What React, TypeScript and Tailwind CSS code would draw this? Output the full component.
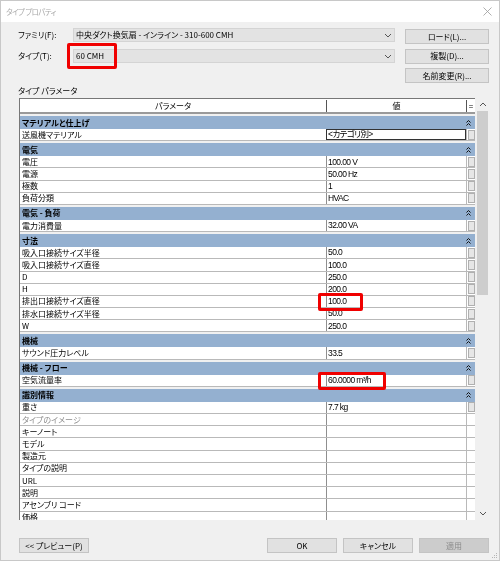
import React from "react";

const font = { fontFamily: '"Noto Sans CJK JP", "Liberation Sans", sans-serif', fontFeatureSettings: '"palt"' };

type Row = { n: string; v?: string; dim?: boolean; sel?: boolean };
type Section = { title: string; rows: Row[] };

const sections: Section[] = [
  { title: "マテリアルと仕上げ", rows: [{ n: "送風機マテリアル", v: "<カテゴリ別>", sel: true }] },
  {
    title: "電気",
    rows: [
      { n: "電圧", v: "100.00 V" },
      { n: "電源", v: "50.00 Hz" },
      { n: "極数", v: "1" },
      { n: "負荷分類", v: "HVAC" },
    ],
  },
  { title: "電気 - 負荷", rows: [{ n: "電力消費量", v: "32.00 VA" }] },
  {
    title: "寸法",
    rows: [
      { n: "吸入口接続サイズ半径", v: "50.0" },
      { n: "吸入口接続サイズ直径", v: "100.0" },
      { n: "D", v: "250.0" },
      { n: "H", v: "200.0" },
      { n: "排出口接続サイズ直径", v: "100.0" },
      { n: "排水口接続サイズ半径", v: "50.0" },
      { n: "W", v: "250.0" },
    ],
  },
  { title: "機械", rows: [{ n: "サウンド圧力レベル", v: "33.5" }] },
  { title: "機械 - フロー", rows: [{ n: "空気流量率", v: "60.0000 m³/h" }] },
  {
    title: "識別情報",
    rows: [
      { n: "重さ", v: "7.7 kg" },
      { n: "タイプのイメージ", dim: true },
      { n: "キーノート" },
      { n: "モデル" },
      { n: "製造元" },
      { n: "タイプの説明" },
      { n: "URL" },
      { n: "説明" },
      { n: "アセンブリ コード" },
      { n: "価格" },
    ],
  },
];

function Chevron() {
  return (
    <svg width="8" height="5" viewBox="0 0 8 5" fill="none" stroke="#555" strokeWidth="1">
      <path d="M1 1l3 3 3-3" />
    </svg>
  );
}

function Combo({ text }: { text: string }) {
  return (
    <div className="flex h-[14px] items-center justify-between border border-[#d4d4d4] bg-[#e3e3e3] pl-[2px] pr-[1px] text-[8px] text-black">
      <span>{text}</span>
      <span className="pr-[1px]">
        <Chevron />
      </span>
    </div>
  );
}

function Btn({ label, className = "", disabled = false }: { label: string; className?: string; disabled?: boolean }) {
  return (
    <div
      className={`flex h-[15px] items-center justify-center border border-[#c4c4c4] text-[8px] ${
        disabled ? "bg-[#cccccc] text-[#8a8a8a]" : "bg-[#e1e1e1] text-black"
      } ${className}`}
    >
      {label}
    </div>
  );
}

function Group({ title }: { title: string }) {
  return (
    <div className="flex h-[13px] items-center justify-between bg-[#94b0d0] pl-[2px] pr-[4px] text-[8px] font-semibold text-black">
      <span>{title}</span>
      <svg width="5" height="6" viewBox="0 0 5 6" fill="none" stroke="#111" strokeWidth="1">
        <path d="M.5 2.5l2-2 2 2M.5 5.5l2-2 2 2" />
      </svg>
    </div>
  );
}

function DataRow({ r }: { r: Row }) {
  return (
    <div className="flex h-[12.2px] border-b border-[#b9b9b9] bg-white text-[8px] leading-none text-black">
      <div className={`flex w-[306px] items-center pl-[2px] ${r.dim ? "text-[#8c8c8c]" : ""}`}>{r.n}</div>
      <div
        className={`flex w-[140px] items-center border-l pl-[1px] ${
          r.sel ? "border border-[#333] bg-white" : "border-[#8f8f8f]"
        }`}
      >
        <span style={{ fontFamily: '"Liberation Sans", "Noto Sans CJK JP", sans-serif' }} className="text-[8.5px] tracking-[-0.6px]">
          {r.v}
        </span>
      </div>
      <div className="flex w-[9px] items-center justify-center border-l border-[#b9b9b9]">
        {r.v && <div className="h-[10px] w-[7px] border border-[#b0b0b0] bg-[#e6e6e6]" />}
      </div>
    </div>
  );
}

function Highlight({ className }: { className: string }) {
  return <div className={`absolute rounded-[2px] border-[3px] border-[#f00000] ${className}`} />;
}

export default function App() {
  return (
    <div
      className="relative flex h-[561px] w-[500px] flex-col border border-[#c8c8c8] bg-[#f0f0f0] blur-[0.3px]"
      style={font}
    >
      <div className="flex h-[21px] shrink-0 items-center justify-between bg-white pl-[5px] pr-[7px]">
        <span className="text-[7.5px] tracking-[-0.6px] text-[#a8a8a8]">タイプ プロパティ</span>
        <svg width="9" height="9" viewBox="0 0 9 9" stroke="#9a9a9a" strokeWidth="0.8">
          <path d="M.5.5l8 8M8.5.5l-8 8" />
        </svg>
      </div>

      <div className="flex shrink-0 gap-[10px] pl-[17px] pr-[10px] pt-[6px]">
        <div className="flex flex-1 flex-col gap-[7px]">
          <div className="flex items-center">
            <span className="w-[55px] text-[8px] text-black">ファミリ(F):</span>
            <div className="flex-1">
              <Combo text="中央ダクト換気扇 - インライン - 310-600 CMH" />
            </div>
          </div>
          <div className="flex items-center">
            <span className="w-[55px] text-[8px] text-black">タイプ(T):</span>
            <div className="flex-1">
              <Combo text="60 CMH" />
            </div>
          </div>
        </div>
        <div className="flex w-[84px] flex-col gap-[4.5px] pt-[1px]">
          <Btn label="ロード(L)..." />
          <Btn label="複製(D)..." />
          <Btn label="名前変更(R)..." />
        </div>
      </div>

      <div className="mt-[1px] h-[13px] shrink-0 pl-[17px] text-[8px] leading-[13px] text-black">タイプ パラメータ</div>

      <div className="ml-[18px] mt-[1px] flex h-[422px] w-[470px] shrink-0">
        <div className="w-[456px] overflow-hidden border-l border-t border-[#777]">
          <div className="flex h-[15px] items-center border-b-2 border-[#9a9a9a] bg-white text-[8px] text-black">
            <div className="w-[306px] text-center">パラメータ</div>
            <div className="w-[140px] border-l border-[#555] text-center">値</div>
            <div className="w-[9px] border-l border-[#555] text-center">=</div>
          </div>
          <div className="flex flex-col gap-[2px] pt-[2px]">
            {sections.map((s) => (
              <div key={s.title}>
                <Group title={s.title} />
                {s.rows.map((r) => (
                  <DataRow key={r.n} r={r} />
                ))}
              </div>
            ))}
          </div>
        </div>
        <div className="ml-[2px] flex w-[11px] flex-col items-center bg-[#f0f0f0]">
          <div className="flex h-[13px] items-center justify-center rotate-180">
            <Chevron />
          </div>
          <div className="h-[184px] w-full bg-[#cdcdcd]" />
          <div className="flex-1" />
          <div className="flex h-[13px] items-center justify-center">
            <Chevron />
          </div>
        </div>
      </div>

      <div className="flex flex-1 items-start justify-between pl-[18px] pr-[10px] pt-[18px]">
        <Btn label="<< プレビュー(P)" className="w-[70px]" />
        <div className="flex gap-[6px]">
          <Btn label="OK" className="w-[70px]" />
          <Btn label="キャンセル" className="w-[70px]" />
          <Btn label="適用" className="w-[70px]" disabled />
        </div>
      </div>

      <svg className="absolute bottom-[1px] right-[1px]" width="7" height="7" viewBox="0 0 7 7" fill="#b5b5b5">
        <rect x="5" y="1" width="1" height="1" />
        <rect x="3" y="3" width="1" height="1" />
        <rect x="5" y="3" width="1" height="1" />
        <rect x="1" y="5" width="1" height="1" />
        <rect x="3" y="5" width="1" height="1" />
        <rect x="5" y="5" width="1" height="1" />
      </svg>

      <Highlight className="left-[66px] top-[42px] h-[26px] w-[50px]" />
      <Highlight className="left-[317px] top-[292px] h-[18px] w-[45px]" />
      <Highlight className="left-[317px] top-[371px] h-[18px] w-[68px]" />
    </div>
  );
}
